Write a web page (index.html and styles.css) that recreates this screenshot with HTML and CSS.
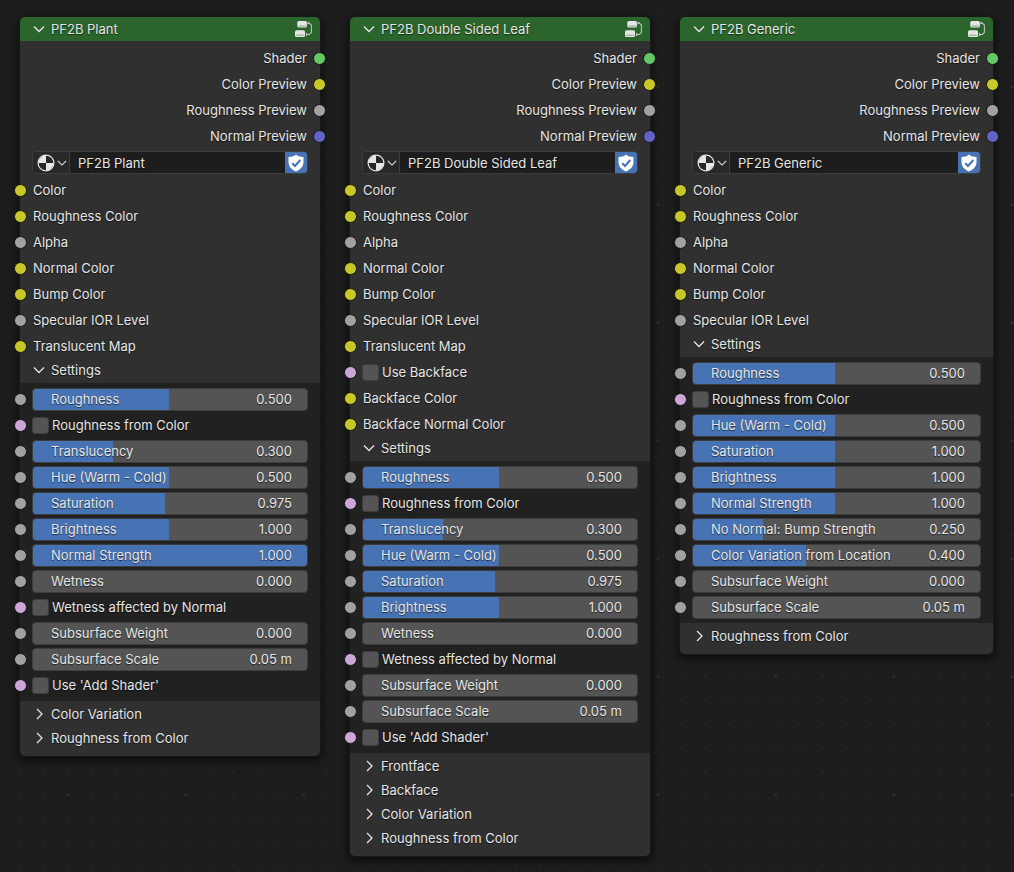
FILE: index.html
```html
<!DOCTYPE html>
<html lang="en">
<head>
<meta charset="utf-8">
<title>Shader Nodes</title>
<link rel="stylesheet" href="styles.css">
</head>
<body>
<svg class="defs" aria-hidden="true">
  <symbol id="down" viewBox="0 0 12 12"><path d="M1 3.5 L6 8.5 L11 3.5" fill="none" stroke="currentColor" stroke-width="1.3"/></symbol>
  <symbol id="right" viewBox="0 0 12 12"><path d="M4 1 L9 6 L4 11" fill="none" stroke="currentColor" stroke-width="1.3"/></symbol>
  <symbol id="group" viewBox="0 0 18 18"><rect x="3.3" y="1" width="9.6" height="6.6" rx="1.5" fill="currentColor"/><rect x="1" y="10.2" width="10" height="6.8" rx="1.5" fill="currentColor"/><path d="M4.5 6h7.200M2.200 15.200h7.500" stroke="#2b652b" stroke-width="1" opacity=".5"/><path d="M14.200 3h1l2.200 2v7.500l-2 2h-1.700" fill="none" stroke="currentColor" stroke-width="1.100" opacity=".75"/><path d="M13.500 1.500l2.200 1.500-2.200 1.500zM12 12.500l2.200 2-2.200 2z" fill="currentColor" opacity=".8"/></symbol>
  <symbol id="material" viewBox="0 0 18 18"><circle cx="9" cy="9" r="7.9" fill="none" stroke="currentColor" stroke-width="1.2"/><path d="M9 1.500V9H1.500A7.500 7.500 0 0 1 9 1.500zM9 9h7.500A7.500 7.500 0 0 1 9 16.500z" fill="currentColor"/></symbol>
  <symbol id="shield" viewBox="0 0 18 18"><path d="M9 0.500C7 2.300 4.500 3 1.500 3v5c0 4.500 3 7.500 7.500 9.500 4.500-2 7.500-5 7.500-9.500V3C13.500 3 11 2.300 9 .500z" fill="#fff"/><path d="M5.200 9.200l2.800 2.800 5.300-6" fill="none" stroke="#4772b3" stroke-width="2"/></symbol>
</svg>
<main class="canvas" id="canvas"></main>
<script src="nodes.js"></script>
</body>
</html>
```
FILE: styles.css
```css
* { box-sizing: border-box; }

body {
  margin: 0;
  min-height: 100vh;
  background: #1d1d1d url("data:image/svg+xml,%3Csvg xmlns='http://www.w3.org/2000/svg' viewBox='0 0 5 5'%3E%3Cdefs%3E%3Cpattern id='d' width='1' height='1' patternUnits='userSpaceOnUse'%3E%3Ccircle cx='.5' cy='.5' r='.045' fill='%23282828'/%3E%3C/pattern%3E%3C/defs%3E%3Crect width='5' height='5' fill='url(%23d)'/%3E%3Ccircle cx='.5' cy='.5' r='.05' fill='%23303030'/%3E%3C/svg%3E") 56px 75px / 118px 118px;
  color: #e6e6e6;
  font: 13px/20px Inter, "Noto Sans", sans-serif;
  text-shadow: 0 1px 1px rgba(0, 0, 0, .6);
}

.defs { display: none; }

button, input {
  margin: 0;
  padding: 0;
  border: 0;
  background: none;
  color: inherit;
  font: inherit;
  text-shadow: inherit;
}

.canvas {
  display: grid;
  grid-template-columns: 300fr 300fr 313fr;
  align-items: start;
  gap: 30px;
  padding: 17px 21px 17px 20px;
}

.node {
  min-width: 0;
  border-radius: 5px;
  background: #303030;
  box-shadow: 0 0 0 1px #181818, 0 3px 10px 2px rgba(0, 0, 0, .6);
}

.icon { flex: none; width: 18px; height: 18px; }
.icon.small { width: 12px; height: 12px; }
.icon.tiny { width: 10px; height: 10px; }

.header {
  display: flex;
  align-items: center;
  justify-content: space-between;
  height: 24px;
  padding: 0 8px 0 13px;
  border-radius: 5px 5px 0 0;
  background: #2b652b;
}

.fold { display: flex; align-items: center; gap: 6px; }

.outputs { padding-top: 4px; }

.row {
  position: relative;
  display: flex;
  align-items: center;
  height: 26px;
  padding: 0 12px;
}

.outputs .row { justify-content: flex-end; padding-right: 13px; }
.inputs .row { padding-left: 13px; }
.inputs .check-row, .panel .row { padding-left: 12px; }

.socket {
  position: absolute;
  top: 7px;
  left: -6px;
  width: 13px;
  height: 13px;
  border: 1px solid #151515;
  border-radius: 50%;
}

.outputs .socket { left: auto; right: -6px; }
.shader { background: #63c763; }
.color { background: #c7c729; }
.float { background: #a1a1a1; }
.vector { background: #6363c7; }
.bool { background: #cca6d6; }

.material {
  display: flex;
  height: 23px;
  margin: 2px 12px 3px;
  overflow: hidden;
  border: 1px solid #3d3d3d;
  border-radius: 4px;
  background: #1d1d1d;
}

.browse {
  display: flex;
  align-items: center;
  gap: 2px;
  width: 37px;
  padding-left: 4px;
  border-right: 1px solid #3d3d3d;
  background: #282828;
}

.name { flex: 1; min-width: 0; padding-left: 8px; }

.fake-user {
  display: flex;
  align-items: center;
  justify-content: center;
  width: 22px;
  background: #4772b3;
}

.settings { height: 24px; padding: 0 13px 2px; }

.panel { padding: 3px 0; background: #212121; }

.slider {
  display: grid;
  grid-template-columns: 1fr auto;
  align-items: center;
  flex: 1;
  height: 23px;
}

.slider label { grid-area: 1 / 1; padding-left: 19px; pointer-events: none; z-index: 1; }
.slider output { grid-area: 1 / 2; padding-right: 16px; pointer-events: none; z-index: 1; }

.slider input {
  grid-area: 1 / 1 / 2 / 3;
  width: 100%;
  height: 23px;
  appearance: none;
  border: 1px solid #3d3d3d;
  border-radius: 4px;
  background: linear-gradient(#4772b3, #4772b3) 0 0 / var(--fill) 100% no-repeat #545454;
}

.slider input::-webkit-slider-thumb { appearance: none; width: 1px; height: 1px; }

.check {
  flex: none;
  width: 17px;
  height: 17px;
  margin-right: 3px;
  appearance: none;
  border: 1px solid #3d3d3d;
  border-radius: 3px;
  background: #545454;
}

.closed { padding: 1px 13px 6px; }
.closed .fold { height: 24px; }
```
FILE: nodes.js
```js
const icon = (id, size = "") => `<svg class="icon ${size}" aria-hidden="true"><use href="#${id}"/></svg>`;
const socket = type => `<span class="socket ${type}"></span>`;

const baseInputs = [
  ["color", "Color"], ["color", "Roughness Color"], ["float", "Alpha"],
  ["color", "Normal Color"], ["color", "Bump Color"], ["float", "Specular IOR Level"]
];

const nodes = [
  {
    name: "PF2B Plant",
    inputs: [...baseInputs, ["color", "Translucent Map"]],
    settings: [
      ["Roughness", "0.500", 49.6], ["Roughness from Color"], ["Translucency", "0.300", 29.2],
      ["Hue (Warm - Cold)", "0.500", 49.6], ["Saturation", "0.975", 48.2], ["Brightness", "1.000", 49.6],
      ["Normal Strength", "1.000", 100], ["Wetness", "0.000", 0], ["Wetness affected by Normal"],
      ["Subsurface Weight", "0.000", 0], ["Subsurface Scale", "0.05 m", 0], ["Use 'Add Shader'"]
    ],
    closed: ["Color Variation", "Roughness from Color"]
  },
  {
    name: "PF2B Double Sided Leaf",
    inputs: [...baseInputs, ["color", "Translucent Map"], ["bool", "Use Backface"],
      ["color", "Backface Color"], ["color", "Backface Normal Color"]],
    settings: [
      ["Roughness", "0.500", 49.6], ["Roughness from Color"], ["Translucency", "0.300", 29.2],
      ["Hue (Warm - Cold)", "0.500", 49.6], ["Saturation", "0.975", 48.2], ["Brightness", "1.000", 49.6],
      ["Wetness", "0.000", 0], ["Wetness affected by Normal"],
      ["Subsurface Weight", "0.000", 0], ["Subsurface Scale", "0.05 m", 0], ["Use 'Add Shader'"]
    ],
    closed: ["Frontface", "Backface", "Color Variation", "Roughness from Color"]
  },
  {
    name: "PF2B Generic",
    inputs: baseInputs,
    settings: [
      ["Roughness", "0.500", 49.6], ["Roughness from Color"], ["Hue (Warm - Cold)", "0.500", 49.6],
      ["Saturation", "1.000", 49.6], ["Brightness", "1.000", 49.6], ["Normal Strength", "1.000", 49.6],
      ["No Normal: Bump Strength", "0.250", 24.5], ["Color Variation from Location", "0.400", 39.5],
      ["Subsurface Weight", "0.000", 0], ["Subsurface Scale", "0.05 m", 0]
    ],
    closed: ["Roughness from Color"]
  }
];

const outputs = [["shader", "Shader"], ["color", "Color Preview"], ["float", "Roughness Preview"], ["vector", "Normal Preview"]];

const checkRow = (id, label) =>
  `<div class="row check-row">${socket("bool")}<input class="check" type="checkbox" id="${id}"><label for="${id}">${label}</label></div>`;

const sliderRow = (id, [label, value, fill]) =>
  `<div class="row">${socket("float")}<div class="slider">
    <input type="range" id="${id}" min="0" max="100" step="0.1" value="${fill}" style="--fill: ${fill}%">
    <label for="${id}">${label}</label><output for="${id}">${value}</output></div></div>`;

document.getElementById("canvas").innerHTML = nodes.map((node, n) => `
  <section class="node">
    <header class="header">
      <button class="fold">${icon("down", "small")}${node.name}</button>${icon("group")}
    </header>
    <div class="outputs">
      ${outputs.map(([type, label]) => `<div class="row">${label}${socket(type)}</div>`).join("")}
    </div>
    <div class="material">
      <button class="browse" aria-label="Browse material">${icon("material")}${icon("down", "tiny")}</button>
      <input class="name" type="text" aria-label="Material name" value="${node.name}">
      <button class="fake-user" aria-label="Fake user">${icon("shield")}</button>
    </div>
    <div class="inputs">
      ${node.inputs.map(([type, label], i) => type === "bool"
        ? checkRow(`in-${n}-${i}`, label)
        : `<div class="row">${socket(type)}${label}</div>`).join("")}
    </div>
    <button class="fold settings">${icon("down", "small")}Settings</button>
    <div class="panel">
      ${node.settings.map((s, i) => s.length === 1 ? checkRow(`set-${n}-${i}`, s[0]) : sliderRow(`set-${n}-${i}`, s)).join("")}
    </div>
    <div class="closed">
      ${node.closed.map(label => `<button class="fold">${icon("right", "small")}${label}</button>`).join("")}
    </div>
  </section>`).join("");
```
